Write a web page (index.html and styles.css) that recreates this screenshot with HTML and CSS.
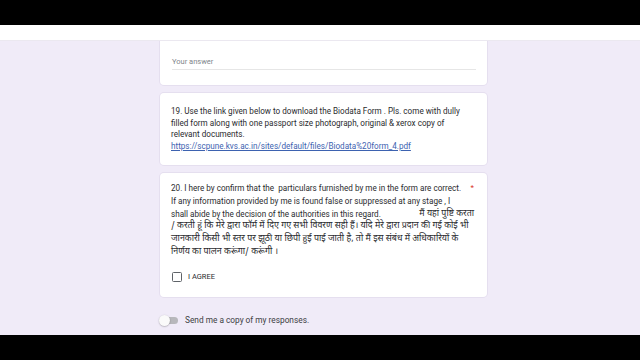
FILE: index.html
```html
<!DOCTYPE html>
<html lang="en">
<head>
<meta charset="utf-8">
<title>Form</title>
<link rel="stylesheet" href="styles.css">
</head>
<body>
<div class="frame">
  <div class="letterbox"></div>
  <div class="topbar"></div>
  <main class="page">
    <div class="column">
      <section class="card card-first">
        <div class="answer">Your answer</div>
      </section>
      <section class="card card-desc">
        <p class="desc">19. Use the link given below to download the Biodata Form . Pls. come with dully<br>filled form along with one passport size photograph, original &amp; xerox copy of<br>relevant documents.<br><a class="link" href="#">https://scpune.kvs.ac.in/sites/default/files/Biodata%20form_4.pdf</a></p>
      </section>
      <section class="card card-q">
        <div class="q-title">
          <div class="ln split"><span>20. I here by confirm that the&nbsp; particulars furnished by me in the form are correct.</span><span class="req">*</span></div>
          <div class="ln">If any information provided by me is found false or suppressed at any stage , I</div>
          <div class="ln split"><span>shall abide by the decision of the authorities in this regard.</span><span class="hi" lang="hi">मैं यहां पुष्टि करता</span></div>
          <div class="ln hi" lang="hi">/ करती हूं कि मेरे द्वारा फॉर्म में दिए गए सभी विवरण सही हैं। यदि मेरे द्वारा प्रदान की गई कोई भी</div>
          <div class="ln hi" lang="hi">जानकारी किसी भी स्तर पर झूठी या छिपी हुई पाई जाती है, तो मैं इस संबंध में अधिकारियों के</div>
          <div class="ln hi" lang="hi">निर्णय का पालन करूंगा/ करूंगी ।</div>
        </div>
        <label class="option">
          <span class="box"></span>
          <span class="opt-text">I AGREE</span>
        </label>
      </section>
      <div class="copy-row">
        <span class="toggle"><span class="thumb"></span></span>
        <span class="copy-text">Send me a copy of my responses.</span>
      </div>
    </div>
  </main>
  <div class="letterbox bottom"></div>
</div>
</body>
</html>
```
FILE: styles.css
```css
* { box-sizing: border-box; }
html, body { margin: 0; padding: 0; }
body {
  width: 640px;
  height: 360px;
  overflow: hidden;
  font-family: Roboto, "Noto Sans", Arial, sans-serif;
  color: #202124;
  background: #000;
}
.frame {
  display: flex;
  flex-direction: column;
  width: 640px;
  height: 360px;
}
.letterbox {
  height: 25px;
  background: #000;
  flex: none;
}
.topbar {
  height: 16px;
  background: #fff;
  border-bottom: 1px solid #ebe8f0;
  flex: none;
}
.page {
  flex: 1;
  background: #f0ebf8;
  overflow: hidden;
}
.column {
  width: 327px;
  margin-left: 160px;
  display: flex;
  flex-direction: column;
  gap: 8px;
}
.card {
  background: #fff;
  border-radius: 4px;
  box-shadow: 0 0 0 1px rgba(60, 40, 100, 0.06);
}
.card-first {
  height: 44px;
  border-radius: 0 0 4px 4px;
  padding: 16px 11px 0 12px;
}
.answer {
  font-size: 7.5px;
  color: #80868b;
  height: 13px;
  line-height: 10px;
  border-bottom: 1px solid #e6e6e6;
  width: 304px;
}
.card-desc {
  height: 72px;
  padding: 13px 11px 0 11px;
}
.desc {
  margin: 0;
  font-size: 8.15px;
  line-height: 11.6px;
  color: #2a2b2e;
}
.link {
  color: #3d62b0;
  text-decoration: underline;
}
.card-q {
  height: 124px;
  padding: 9px 11px 0 11px;
}
.q-title {
  width: 305px;
  font-size: 8.15px;
  line-height: 12.8px;
  color: #2a2b2e;
}
.ln {
  white-space: nowrap;
}
.split {
  display: flex;
  justify-content: space-between;
  padding-right: 2px;
}
.hi {
  font-family: "Noto Sans Devanagari", "Lohit Devanagari", "FreeSans", Roboto, sans-serif;
  font-size: 8.9px;
}
.req {
  color: #d93025;
  font-size: 8px;
}
.option {
  display: flex;
  align-items: center;
  gap: 6px;
  margin-top: 13px;
  margin-left: 1px;
}
.box {
  width: 10px;
  height: 10px;
  border: 1.5px solid #5f6368;
  border-radius: 1.5px;
  flex: none;
}
.opt-text {
  font-size: 7.5px;
  color: #2a2b2e;
}
.copy-row {
  display: flex;
  align-items: center;
  gap: 7px;
  height: 16px;
  margin-top: 7px;
}
.toggle {
  position: relative;
  width: 18px;
  height: 7px;
  background: #b8b8bc;
  border-radius: 4px;
  flex: none;
}
.thumb {
  position: absolute;
  left: -1px;
  top: -2px;
  width: 11px;
  height: 11px;
  border-radius: 50%;
  background: #fafafa;
  box-shadow: 0 0.5px 1.5px rgba(0, 0, 0, 0.35);
}
.copy-text {
  font-size: 8.3px;
  color: #3c4043;
}
```
